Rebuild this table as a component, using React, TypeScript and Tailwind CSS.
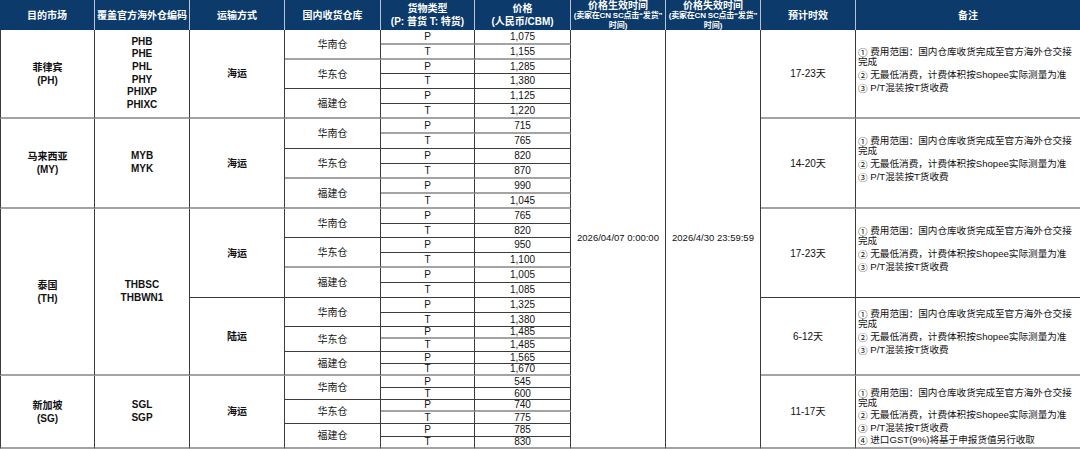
import React from 'react';

type PT = [string, string, 'g' | 'd'];
type Wh = { name: string; rows: PT[] };
type Note = [string, string];
type Transport = { name: string; span: string; eta: string; notes: Note[]; wh: Wh[]; bottom: 'g' | 'd'; notesCls: string };
type Section = { market: string; code: string; codes: string[]; span: string; transports: Transport[] };

const notes3: Note[] = [
  ['①', '费用范围：国内仓库收货完成至官方海外仓交接完成'],
  ['②', '无最低消费，计费体积按Shopee实际测量为准'],
  ['③', 'P/T混装按T货收费'],
];
const notes4: Note[] = [...notes3, ['④', '进口GST(9%)将基于申报货值另行收取']];

const normalNotes = 'justify-center pb-[8px] gap-[3px]';
const sgNotes = 'justify-end pb-[2px] gap-[2.5px]';

const sections: Section[] = [
  {
    market: '菲律宾',
    code: '(PH)',
    codes: ['PHB', 'PHE', 'PHL', 'PHY', 'PHIXP', 'PHIXC'],
    span: 'row-span-6',
    transports: [
      {
        name: '海运',
        span: 'row-span-6',
        eta: '17-23天',
        notes: notes3,
        bottom: 'g',
        notesCls: normalNotes,
        wh: [
          { name: '华南仓', rows: [['P', '1,075', 'g'], ['T', '1,155', 'g']] },
          { name: '华东仓', rows: [['P', '1,285', 'd'], ['T', '1,380', 'd']] },
          { name: '福建仓', rows: [['P', '1,125', 'd'], ['T', '1,220', 'g']] },
        ],
      },
    ],
  },
  {
    market: '马来西亚',
    code: '(MY)',
    codes: ['MYB', 'MYK'],
    span: 'row-span-6',
    transports: [
      {
        name: '海运',
        span: 'row-span-6',
        eta: '14-20天',
        notes: notes3,
        bottom: 'g',
        notesCls: normalNotes,
        wh: [
          { name: '华南仓', rows: [['P', '715', 'g'], ['T', '765', 'd']] },
          { name: '华东仓', rows: [['P', '820', 'd'], ['T', '870', 'g']] },
          { name: '福建仓', rows: [['P', '990', 'g'], ['T', '1,045', 'g']] },
        ],
      },
    ],
  },
  {
    market: '泰国',
    code: '(TH)',
    codes: ['THBSC', 'THBWN1'],
    span: 'row-span-12',
    transports: [
      {
        name: '海运',
        span: 'row-span-6',
        eta: '17-23天',
        notes: notes3,
        bottom: 'd',
        notesCls: normalNotes,
        wh: [
          { name: '华南仓', rows: [['P', '765', 'd'], ['T', '820', 'd']] },
          { name: '华东仓', rows: [['P', '950', 'd'], ['T', '1,100', 'g']] },
          { name: '福建仓', rows: [['P', '1,005', 'd'], ['T', '1,085', 'd']] },
        ],
      },
      {
        name: '陆运',
        span: 'row-span-6',
        eta: '6-12天',
        notes: notes3,
        bottom: 'g',
        notesCls: normalNotes,
        wh: [
          { name: '华南仓', rows: [['P', '1,325', 'd'], ['T', '1,380', 'd']] },
          { name: '华东仓', rows: [['P', '1,485', 'g'], ['T', '1,485', 'd']] },
          { name: '福建仓', rows: [['P', '1,565', 'd'], ['T', '1,670', 'g']] },
        ],
      },
    ],
  },
  {
    market: '新加坡',
    code: '(SG)',
    codes: ['SGL', 'SGP'],
    span: 'row-span-6',
    transports: [
      {
        name: '海运',
        span: 'row-span-6',
        eta: '11-17天',
        notes: notes4,
        bottom: 'g',
        notesCls: sgNotes,
        wh: [
          { name: '华南仓', rows: [['P', '545', 'd'], ['T', '600', 'd']] },
          { name: '华东仓', rows: [['P', '740', 'g'], ['T', '775', 'd']] },
          { name: '福建仓', rows: [['P', '785', 'd'], ['T', '830', 'g']] },
        ],
      },
    ],
  },
];

const B = (t: 'g' | 'd') => (t === 'g' ? 'border-b-2 border-b-[#a3a3a3]' : 'border-b border-b-[#3c3c3c]');
const R = 'border-r border-r-[#3c3c3c]';
const base = 'flex items-center justify-center text-center overflow-hidden text-[#111]';

function HeadCell({ children, cls = '' }: { children: React.ReactNode; cls?: string }) {
  return (
    <div className={`bg-[#0b3a6b] text-white font-bold border-r border-r-[#b9c4d2] overflow-hidden flex flex-col items-center text-center ${cls}`}>
      {children}
    </div>
  );
}

function Sub() {
  return (
    <>
      <div className="text-[8px] leading-[10px] whitespace-nowrap tracking-[-0.2px]">(卖家在CN SC点击“发货”</div>
      <div className="text-[8px] leading-[10px]">时间)</div>
    </>
  );
}

export default function App() {
  const cells: React.ReactNode[] = [];
  let k = 0;
  sections.forEach((s, si) => {
    s.transports.forEach((t, ti) => {
      t.wh.forEach((w, wi) => {
        w.rows.forEach((r, ri) => {
          const first = wi === 0 && ri === 0;
          if (first && ti === 0) {
            cells.push(
              <div key={k++} className={`${s.span} ${base} flex-col border-l border-l-[#3c3c3c] ${R} border-b-2 border-b-[#a3a3a3] font-bold text-[10px] leading-[13px]`}>
                <div>{s.market}</div>
                <div>{s.code}</div>
              </div>
            );
            cells.push(
              <div key={k++} className={`${s.span} ${base} flex-col ${R} border-b-2 border-b-[#a3a3a3] font-bold text-[10px] leading-[12.6px]`}>
                {s.codes.map((c) => (
                  <div key={c}>{c}</div>
                ))}
              </div>
            );
          }
          if (first) {
            cells.push(
              <div key={k++} className={`${t.span} ${base} ${R} ${B(t.bottom)} font-bold text-[10px]`}>
                {t.name}
              </div>
            );
          }
          if (ri === 0) {
            cells.push(
              <div key={k++} className={`row-span-2 ${base} ${R} ${B(w.rows[1][2])} text-[10px]`}>
                {w.name}
              </div>
            );
          }
          cells.push(
            <div key={k++} className={`${base} ${R} ${B(r[2])} text-[10px] leading-none`}>
              {r[0]}
            </div>
          );
          cells.push(
            <div key={k++} className={`${base} ${R} ${B(r[2])} text-[10px] leading-none`}>
              {r[1]}
            </div>
          );
          if (first && si === 0 && ti === 0) {
            cells.push(
              <div key={k++} className={`row-span-30 ${base} ${R} border-b-2 border-b-[#a3a3a3] text-[9.5px]`}>
                2026/04/07 0:00:00
              </div>
            );
            cells.push(
              <div key={k++} className={`row-span-30 ${base} ${R} border-b-2 border-b-[#a3a3a3] text-[9.5px]`}>
                2026/4/30 23:59:59
              </div>
            );
          }
          if (first) {
            cells.push(
              <div key={k++} className={`${t.span} ${base} ${R} ${B(t.bottom)} text-[10px]`}>
                {t.eta}
              </div>
            );
            cells.push(
              <div key={k++} className={`${t.span} flex flex-col ${t.notesCls} overflow-hidden ${B(t.bottom)} pl-[2px] pr-[4px] text-left text-[9.6px] leading-[10px] text-[#111]`}>
                {t.notes.map((n) => (
                  <div key={n[1]}>
                    <span className="inline-block h-[10px] leading-[10px] align-top font-['Noto_Sans_CJK_SC',sans-serif]">{n[0]}</span> {n[1]}
                  </div>
                ))}
              </div>
            );
          }
        });
      });
    });
  });

  return (
    <div className="w-[1080px] h-[449px] overflow-hidden bg-white font-['Liberation_Sans','Noto_Sans_CJK_SC',sans-serif]">
      <div className="grid grid-cols-[95px_95px_95px_96px_94px_96px_95px_95px_95px_224px] grid-rows-[30px_15px_15px_14px_15px_15px_15px_15px_15px_15px_15px_15px_15px_15px_14px_15px_15px_15px_15px_15px_14px_12px_13px_12px_12px_12px_12px_12px_12px_13px_12px]">
        <HeadCell cls="justify-center text-[10px]">目的市场</HeadCell>
        <HeadCell cls="justify-center text-[10px]">覆盖官方海外仓编码</HeadCell>
        <HeadCell cls="justify-center text-[10px]">运输方式</HeadCell>
        <HeadCell cls="justify-center text-[10px]">国内收货仓库</HeadCell>
        <HeadCell cls="justify-center text-[10px] leading-[13px]">
          <div>货物类型</div>
          <div>(P: 普货 T: 特货)</div>
        </HeadCell>
        <HeadCell cls="justify-center text-[10px] leading-[13px]">
          <div>价格</div>
          <div>(人民币/CBM)</div>
        </HeadCell>
        <HeadCell cls="justify-start">
          <div className="text-[10px] leading-[11px]">价格生效时间</div>
          <Sub />
        </HeadCell>
        <HeadCell cls="justify-start">
          <div className="text-[10px] leading-[11px]">价格失效时间</div>
          <Sub />
        </HeadCell>
        <HeadCell cls="justify-center text-[10px]">预计时效</HeadCell>
        <HeadCell cls="justify-center text-[10px] border-r-0">备注</HeadCell>
        {cells}
      </div>
    </div>
  );
}
